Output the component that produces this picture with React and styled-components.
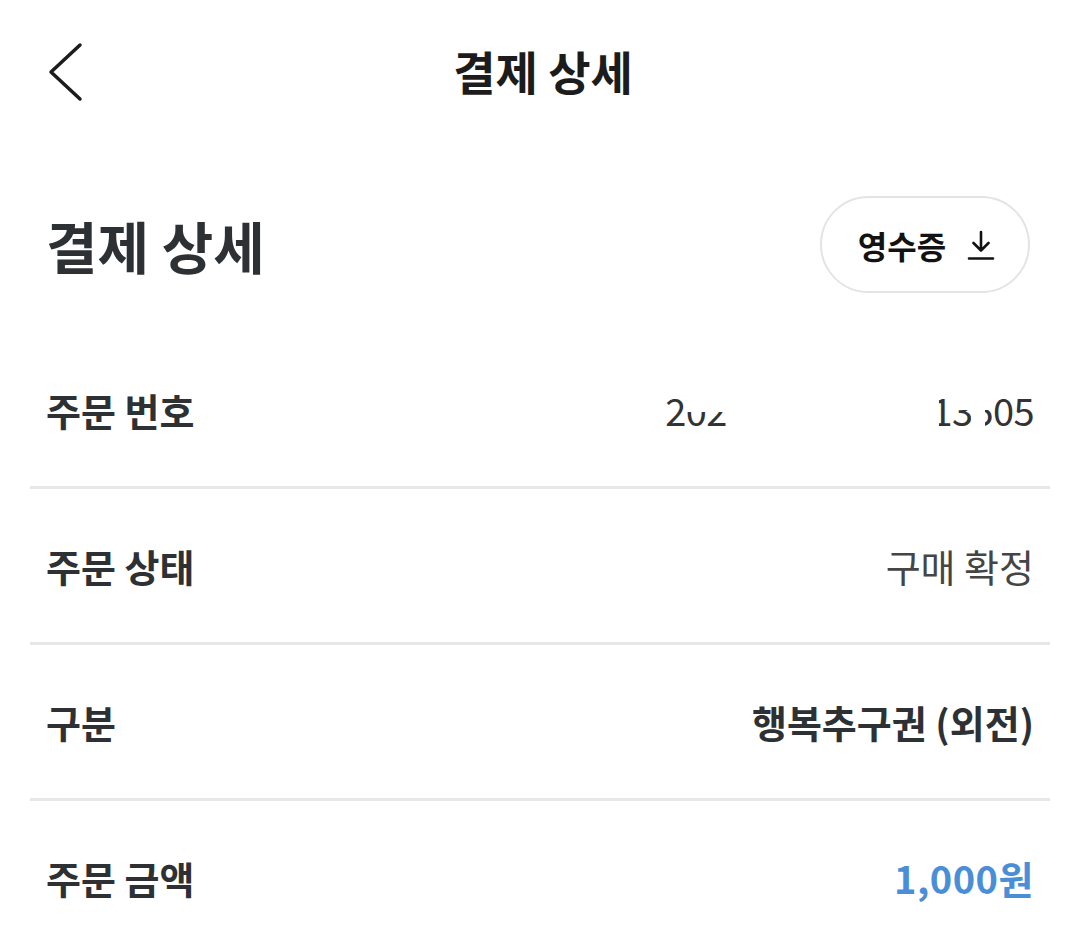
import styled, { createGlobalStyle } from 'styled-components';

const GlobalStyle = createGlobalStyle`
  html, body {
    margin: 0;
    padding: 0;
    background: #ffffff;
  }
  body {
    font-family: "Noto Sans CJK KR", "Noto Sans", sans-serif;
    -webkit-font-smoothing: antialiased;
  }
`;

const Page = styled.div`
  width: 1080px;
  min-height: 952px;
  background: #fff;
  overflow: hidden;
`;

const TopBar = styled.header`
  height: 144px;
  display: grid;
  grid-template-columns: 1fr auto 1fr;
  align-items: center;
  padding: 0 48px 0 46px;
`;

const BackButton = styled.button`
  justify-self: start;
  width: 44px;
  height: 64px;
  padding: 0;
  border: 0;
  background: none;
  display: flex;
  align-items: center;
  cursor: pointer;
`;

const TopTitle = styled.h1`
  margin: 0 0 4px;
  font-size: 46px;
  font-weight: 700;
  color: #1c1c1c;
  transform: translateX(4px);
`;

const TitleRow = styled.section`
  display: flex;
  align-items: center;
  justify-content: space-between;
  margin-top: 52px;
  padding: 0 50px 0 46px;
  height: 97px;
  margin-bottom: 40px;
`;

const PageTitle = styled.h2`
  margin: 0;
  font-size: 56px;
  font-weight: 700;
  color: #2e3134;
`;

const ReceiptButton = styled.button`
  height: 97px;
  width: 210px;
  box-sizing: border-box;
  border: 2px solid #e4e4e4;
  border-radius: 49px;
  background: #fff;
  display: flex;
  align-items: center;
  justify-content: center;
  gap: 20px;
  padding: 0 0 0 4px;
  font-family: inherit;
  font-size: 32px;
  font-weight: 700;
  color: #121212;
  cursor: pointer;
`;

const List = styled.ul`
  list-style: none;
  margin: 0 30px;
  padding: 0;
`;

const Row = styled.li`
  height: 153px;
  display: flex;
  align-items: center;
  justify-content: space-between;
  padding: 0 16px;
  border-bottom: ${({ $last }) => ($last ? '0' : '3px solid #e6e7e9')};
`;

const Label = styled.span`
  font-size: 38px;
  font-weight: 700;
  color: #2e3134;
`;

const Value = styled.span`
  position: relative;
  font-size: 38px;
  letter-spacing: ${({ $spacing }) => $spacing || '0'};
  font-weight: ${({ $weight }) => $weight || 700};
  color: ${({ $color }) => $color || '#2e3134'};
`;

// white blocks hiding part of the order number
const Mask = styled.span`
  position: absolute;
  background: #fff;
  top: 0;
  height: ${({ $h }) => $h};
  left: ${({ $l }) => $l}px;
  width: ${({ $w }) => $w}px;
`;

const ChevronLeft = () => (
  <svg width="40" height="60" viewBox="0 0 40 60" fill="none">
    <path
      d="M34 3 L5 30 L34 57"
      stroke="#1c1c1c"
      strokeWidth="3.5"
      strokeLinecap="round"
      strokeLinejoin="round"
    />
  </svg>
);

const DownloadIcon = () => (
  <svg width="30" height="32" viewBox="0 0 30 32" fill="none">
    <path
      d="M15 3 V21 M7.5 14 L15 21.5 L22.5 14 M3 29.5 H27"
      stroke="#121212"
      strokeWidth="2.6"
      strokeLinecap="round"
      strokeLinejoin="round"
    />
  </svg>
);

const rows = [
  { label: '주문 상태', value: '구매 확정', weight: 400, color: '#454545' },
  { label: '구분', value: '행복추구권 (외전)' },
  { label: '주문 금액', value: '1,000원', color: '#4a8ed8', spacing: '0.5px' },
];

export default function App() {
  return (
    <Page>
      <GlobalStyle />
      <TopBar>
        <BackButton aria-label="뒤로">
          <ChevronLeft />
        </BackButton>
        <TopTitle>결제 상세</TopTitle>
        <span />
      </TopBar>

      <TitleRow>
        <PageTitle>결제 상세</PageTitle>
        <ReceiptButton>
          영수증
          <DownloadIcon />
        </ReceiptButton>
      </TitleRow>

      <List>
        <Row>
          <Label>주문 번호</Label>
          <Value $weight={400} $color="#333" $spacing="-0.6px">
            202506170000013505
            <Mask $l={22} $w={40} $h="55%" />
            <Mask $l={62} $w={212} $h="100%" />
            <Mask $l={288} $w={38} $h="50%" />
            <Mask $l={306} $w={14} $h="100%" />
          </Value>
        </Row>
        {rows.map((r, i) => (
          <Row key={r.label} $last={i === rows.length - 1}>
            <Label>{r.label}</Label>
            <Value $weight={r.weight} $color={r.color} $spacing={r.spacing}>
              {r.value}
            </Value>
          </Row>
        ))}
      </List>
    </Page>
  );
}
